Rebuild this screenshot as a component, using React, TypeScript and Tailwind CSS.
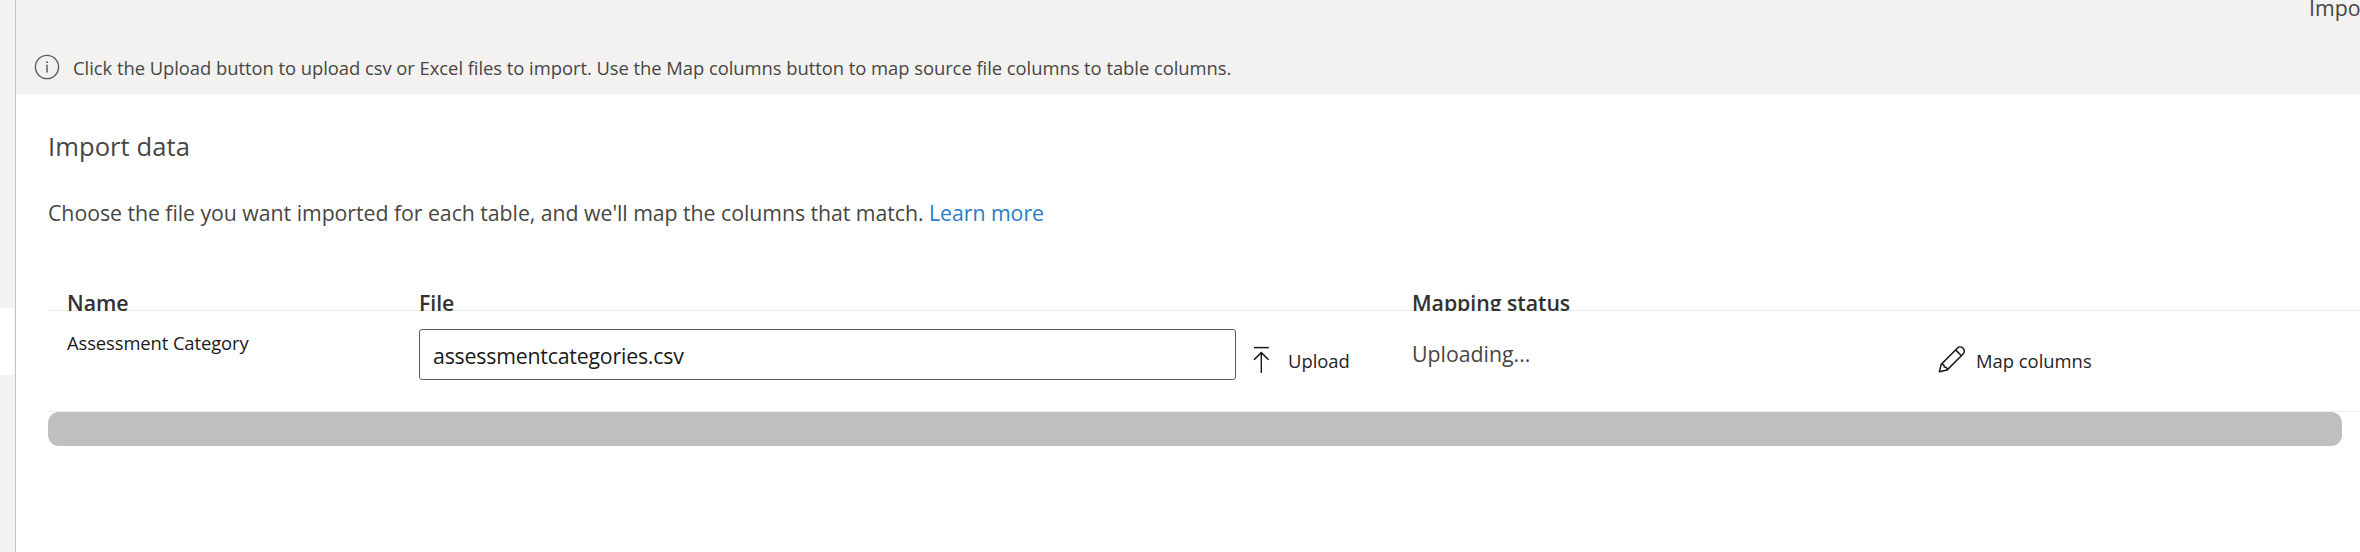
import type { ReactNode } from "react";

function InfoIcon() {
  return (
    <svg width="26" height="26" viewBox="0 0 26 26" fill="none" stroke="#605e5c" className="shrink-0">
      <circle cx="13" cy="13" r="11.6" strokeWidth="1.4" />
      <path d="M13 10.8V18.6" strokeWidth="1.5" />
      <path d="M13 7.2V8.9" strokeWidth="1.7" />
    </svg>
  );
}

function UploadIcon() {
  return (
    <svg width="28" height="28" viewBox="0 0 28 28" fill="none" stroke="#1b1a19" className="shrink-0">
      <path d="M7 2.6H21.8" strokeWidth="1.5" />
      <path d="M14.3 7.6V28" strokeWidth="1.4" />
      <path d="M7 14.8L14.3 7.6L21.6 14.8" strokeWidth="1.6" />
    </svg>
  );
}

function PencilIcon() {
  return (
    <svg width="28" height="28" viewBox="0 0 28 28" fill="none" stroke="#1b1a19" strokeWidth="1.5" strokeLinejoin="round" className="shrink-0">
      <path d="M1.4 26.8L3.2 19.4L19.3 3.2A4.1 4.1 0 0 1 25.1 9L9 25.1Z" />
      <path d="M17.6 4.9L23.4 10.7" />
      <path d="M3.2 19.4C5.6 19.2 6.4 20 6.2 22.1C8.4 22 9.2 22.9 9 25.1" />
    </svg>
  );
}

function HeaderCell({ children }: { children?: ReactNode }) {
  return <div className="h-[22px] overflow-hidden text-[21.3px] leading-7 font-semibold tracking-[-0.04px] text-[#323130]">{children}</div>;
}

const columns = "grid grid-cols-[352px_823px_170px_526px_1fr]";

export default function App() {
  return (
    <div className="flex h-[552px] w-full overflow-hidden bg-white font-['Open_Sans','Noto_Sans',sans-serif] whitespace-nowrap">
      <aside className="w-4 shrink-0 border-r border-[#c8c6c4] bg-[#f3f2f1] pt-[308px]">
        <div className="h-[67px] w-[14px] rounded-r-[3px] bg-white" />
      </aside>
      <main className="min-w-0 flex-1">
        <header className="h-[94px] overflow-hidden bg-[#f3f2f1]">
          <div className="-mt-[6px] flex h-[60px] justify-end">
            <span className="w-[51px] overflow-hidden text-[21.3px] leading-7 text-[#484644]">Import</span>
          </div>
          <div className="flex items-start pl-[18px]">
            <InfoIcon />
            <p className="mt-[2px] ml-[13px] text-[18.4px] leading-6 tracking-[-0.04px] text-[#484644]">
              Click the Upload button to upload csv or Excel files to import. Use the Map columns button to map source file columns to table columns.
            </p>
          </div>
        </header>
        <section className="pt-[35px] pl-8">
          <h1 className="text-[25.6px] leading-9 tracking-[0.05px] text-[#484644]">Import data</h1>
          <p className="mt-[34px] text-[21.3px] leading-7 tracking-[-0.05px] text-[#484644]">
            Choose the file you want imported for each table, and we'll map the columns that match.{" "}
            <a className="text-[#2b7cc7]">Learn more</a>
          </p>
          <div className={`${columns} mt-[62px] h-[22px] bg-[linear-gradient(#eaeaea,#eaeaea)] bg-[length:100%_1px] bg-[position:0_21px] bg-no-repeat pl-[19px]`}>
            <HeaderCell>Name</HeaderCell>
            <HeaderCell>File</HeaderCell>
            <HeaderCell />
            <HeaderCell>Mapping status</HeaderCell>
            <HeaderCell />
          </div>
          <div className={`${columns} h-[101px] border-b border-[#f0f0f0] pl-[19px]`}>
            <div className="pt-5 text-[18.4px] leading-6 tracking-[-0.1px] text-[#1b1a19]">Assessment Category</div>
            <div className="mt-[18px] flex h-[51px] w-[817px] rounded-[3px] border border-[#605e5c] pt-[12px] pl-[13px] text-[21.3px] leading-7 tracking-[-0.2px] text-[#1b1a19]">
              assessmentcategories.csv
            </div>
            <div className="flex pt-[34px] pl-[5px]">
              <UploadIcon />
              <span className="mt-[4px] ml-[13px] text-[18.4px] leading-6 text-[#252423]">Upload</span>
            </div>
            <div className="pt-[29px] text-[21.3px] leading-7 text-[#484644]">Uploading...</div>
            <div className="flex pt-[34px]">
              <PencilIcon />
              <span className="mt-[4px] ml-[10px] text-[18.4px] leading-6 text-[#252423]">Map columns</span>
            </div>
          </div>
          <div className="mr-[18px] h-[34px] rounded-[11px] bg-[#bfbfbf]" />
        </section>
      </main>
    </div>
  );
}
